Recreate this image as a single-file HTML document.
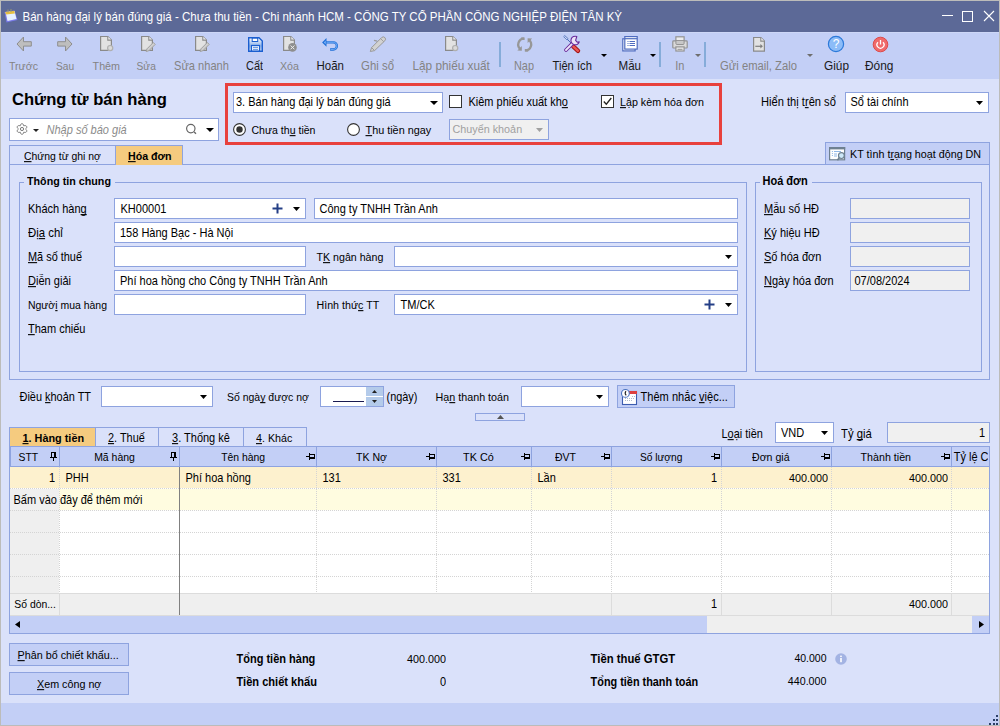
<!DOCTYPE html>
<html><head><meta charset="utf-8"><title>Chứng từ bán hàng</title>
<style>
html,body{margin:0;padding:0;width:1000px;height:726px;overflow:hidden;background:#dae1fa}
.a{position:absolute;margin:0;padding:0}
.t{white-space:nowrap;font-family:"Liberation Sans",sans-serif;line-height:normal}
u{text-decoration:underline;text-underline-offset:1px;text-decoration-skip-ink:none}
svg{overflow:visible}
</style></head><body>
<div class=a style='left:0;top:0;width:1000px;height:726px;background:#bcbcba'></div>
<div class=a style="left:1px;top:1px;width:998px;height:724px;background:#dae1fa;"></div>
<div class=a style="left:1px;top:1px;width:998px;height:31px;background:#5c6997;"></div>
<svg class=a style="left:3px;top:7px;" width=16 height=16 viewBox='0 0 16 16'><path d='M1.5 5 L11.5 3.5 L14.5 13 L3.5 15.5 Z' fill='#7a7ae8'/><path d='M2.5 5 L11.5 4 L13.5 12 L4.5 14 Z' fill='#e8f2ff'/><path d='M2.2 5 L11.3 3.8 L11.9 6.5 L3 7.6 Z' fill='#e8c040'/><path d='M5 2.5v3M8 2v3' stroke='#9a9a70' stroke-width='1'/></svg>
<div class='a t' style="left:22.5px;top:11px;font-size:11.52px;font-weight:normal;font-style:normal;color:#fff;transform:scaleY(1.09);transform-origin:0 10px;">Bán hàng đại lý bán đúng giá - Chưa thu tiền - Chi nhánh HCM - CÔNG TY CỔ PHẦN CÔNG NGHIỆP ĐIỆN TÂN KỲ</div>
<div class=a style="left:942px;top:15px;width:11px;height:1px;background:#fff;"></div>
<div class=a style="left:962px;top:11px;width:11px;height:11px;border:1px solid #fff;box-sizing:border-box;"></div>
<svg class=a style="left:983px;top:10px;" width=12 height=12 viewBox='0 0 12 12'><path d='M1 1L11 11M11 1L1 11' stroke='#fff' stroke-width='1.1'/></svg>
<div class=a style="left:1px;top:32px;width:998px;height:47px;background:#c3cff6;"></div>
<div class=a style="left:1px;top:32px;width:998px;height:1px;background:#cdd7f7;"></div>
<div class='a t' style="left:-176.5px;width:400px;text-align:center;top:60px;font-size:10.62px;font-weight:normal;font-style:normal;color:#838383;transform:scaleY(1.09);transform-origin:0 10px;">Trước</div>
<div class='a t' style="left:-135px;width:400px;text-align:center;top:61px;font-size:10.2px;font-weight:normal;font-style:normal;color:#838383;transform:scaleY(1.09);transform-origin:0 9px;">Sau</div>
<div class='a t' style="left:-93.7px;width:400px;text-align:center;top:60px;font-size:10.76px;font-weight:normal;font-style:normal;color:#838383;transform:scaleY(1.09);transform-origin:0 10px;">Thêm</div>
<div class='a t' style="left:-53.80000000000001px;width:400px;text-align:center;top:61px;font-size:10.2px;font-weight:normal;font-style:normal;color:#838383;transform:scaleY(1.09);transform-origin:0 9px;">Sửa</div>
<div class='a t' style="left:1.5px;width:400px;text-align:center;top:60px;font-size:11.1px;font-weight:normal;font-style:normal;color:#838383;transform:scaleY(1.09);transform-origin:0 10px;">Sửa nhanh</div>
<div class='a t' style="left:54.5px;width:400px;text-align:center;top:60px;font-size:10.92px;font-weight:normal;font-style:normal;color:#1a1a1a;transform:scaleY(1.09);transform-origin:0 10px;">Cất</div>
<div class='a t' style="left:89.5px;width:400px;text-align:center;top:60px;font-size:10.67px;font-weight:normal;font-style:normal;color:#838383;transform:scaleY(1.09);transform-origin:0 10px;">Xóa</div>
<div class='a t' style="left:130.2px;width:400px;text-align:center;top:60px;font-size:11.5px;font-weight:normal;font-style:normal;color:#1a1a1a;transform:scaleY(1.09);transform-origin:0 10px;">Hoãn</div>
<div class='a t' style="left:177.5px;width:400px;text-align:center;top:60px;font-size:11.41px;font-weight:normal;font-style:normal;color:#838383;transform:scaleY(1.09);transform-origin:0 10px;">Ghi sổ</div>
<div class='a t' style="left:251.2px;width:400px;text-align:center;top:59px;font-size:11.8px;font-weight:normal;font-style:normal;color:#838383;transform:scaleY(1.09);transform-origin:0 11px;">Lập phiếu xuất</div>
<div class='a t' style="left:324px;width:400px;text-align:center;top:60px;font-size:10.9px;font-weight:normal;font-style:normal;color:#838383;transform:scaleY(1.09);transform-origin:0 10px;">Nạp</div>
<div class='a t' style="left:372.20000000000005px;width:400px;text-align:center;top:60px;font-size:11.21px;font-weight:normal;font-style:normal;color:#1a1a1a;transform:scaleY(1.09);transform-origin:0 10px;">Tiện ích</div>
<div class='a t' style="left:429.79999999999995px;width:400px;text-align:center;top:60px;font-size:11.56px;font-weight:normal;font-style:normal;color:#1a1a1a;transform:scaleY(1.09);transform-origin:0 10px;">Mẫu</div>
<div class='a t' style="left:479.79999999999995px;width:400px;text-align:center;top:60px;font-size:11px;font-weight:normal;font-style:normal;color:#838383;transform:scaleY(1.09);transform-origin:0 10px;">In</div>
<div class='a t' style="left:558.5px;width:400px;text-align:center;top:60px;font-size:11.26px;font-weight:normal;font-style:normal;color:#838383;transform:scaleY(1.09);transform-origin:0 10px;">Gửi email, Zalo</div>
<div class='a t' style="left:636.5px;width:400px;text-align:center;top:59px;font-size:11.83px;font-weight:normal;font-style:normal;color:#1a1a1a;transform:scaleY(1.09);transform-origin:0 11px;">Giúp</div>
<div class='a t' style="left:679.2px;width:400px;text-align:center;top:59px;font-size:11.91px;font-weight:normal;font-style:normal;color:#1a1a1a;transform:scaleY(1.09);transform-origin:0 11px;">Đóng</div>
<div class=a style="left:499px;top:42px;width:2px;height:25px;background:#86acd9;"></div>
<div class=a style="left:659px;top:42px;width:2px;height:25px;background:#86acd9;"></div>
<div class=a style="left:704px;top:42px;width:2px;height:25px;background:#86acd9;"></div>
<svg class=a style="left:601px;top:54px;" width=6 height=3 viewBox='0 0 6 3'><path d='M0 0H6L3 3Z' fill='#000'/></svg>
<svg class=a style="left:650px;top:54px;" width=6 height=3 viewBox='0 0 6 3'><path d='M0 0H6L3 3Z' fill='#000'/></svg>
<svg class=a style="left:695px;top:54px;" width=6 height=3 viewBox='0 0 6 3'><path d='M0 0H6L3 3Z' fill='#6e6e6e'/></svg>
<svg class=a style="left:807px;top:54px;" width=6 height=3 viewBox='0 0 6 3'><path d='M0 0H6L3 3Z' fill='#6e6e6e'/></svg>
<svg class=a style="left:16px;top:36px;" width=17 height=17 viewBox='0 0 17 17'><path d='M7.5 1 L1 8 L7.5 15 V10.1 H15.3 V5.7 H7.5 Z' fill='#bebebe' stroke='#8e8e8e' stroke-width='1'/></svg>
<svg class=a style="left:57px;top:36px;" width=17 height=17 viewBox='0 0 17 17'><path d='M8.5 1 L15 8 L8.5 15 V10.1 H0.7 V5.7 H8.5 Z' fill='#bebebe' stroke='#8e8e8e' stroke-width='1'/></svg>
<svg class=a style="left:100px;top:35px;" width=16 height=18 viewBox='0 0 16 18'><path d='M0.6 1.5 H7.8 L11.4 5.1 V15.4 H0.6 Z' fill='#e2e2e2' stroke='#8a8a8a' stroke-width='1.2'/><path d='M7.8 1.5 V5.1 H11.4' fill='#f4f4f4' stroke='#8a8a8a' stroke-width='1.1'/><circle cx='10.2' cy='13.1' r='2.6' fill='#dadada' stroke='#b0b0b0' stroke-width='1.2'/></svg>
<svg class=a style="left:141px;top:35px;" width=16 height=18 viewBox='0 0 16 18'><path d='M0.6 1.5 H7.8 L11.4 5.1 V15.4 H0.6 Z' fill='#e2e2e2' stroke='#8a8a8a' stroke-width='1.2'/><path d='M7.8 1.5 V5.1 H11.4' fill='#f4f4f4' stroke='#8a8a8a' stroke-width='1.1'/><path d='M5.2 16.5 L6 13.8 L12.3 7.5 L14.2 9.4 L7.9 15.7 Z' fill='#cfcfcf' stroke='#a0a0a0' stroke-width='1'/></svg>
<svg class=a style="left:195px;top:35px;" width=16 height=18 viewBox='0 0 16 18'><path d='M0.6 1.5 H7.8 L11.4 5.1 V15.4 H0.6 Z' fill='#e2e2e2' stroke='#8a8a8a' stroke-width='1.2'/><path d='M7.8 1.5 V5.1 H11.4' fill='#f4f4f4' stroke='#8a8a8a' stroke-width='1.1'/><path d='M5.2 16.5 L6 13.8 L12.3 7.5 L14.2 9.4 L7.9 15.7 Z' fill='#cfcfcf' stroke='#a0a0a0' stroke-width='1'/></svg>
<svg class=a style="left:283px;top:35px;" width=16 height=18 viewBox='0 0 16 18'><path d='M0.6 1.5 H7.8 L11.4 5.1 V15.4 H0.6 Z' fill='#e2e2e2' stroke='#8a8a8a' stroke-width='1.2'/><path d='M7.8 1.5 V5.1 H11.4' fill='#f4f4f4' stroke='#8a8a8a' stroke-width='1.1'/><circle cx='9.5' cy='12.4' r='4.3' fill='#8e8e8e'/><path d='M7.6 10.5L11.4 14.3M11.4 10.5L7.6 14.3' stroke='#efefef' stroke-width='1'/></svg>
<svg class=a style="left:445px;top:35px;" width=16 height=18 viewBox='0 0 16 18'><path d='M0.6 1.5 H7.8 L11.4 5.1 V15.4 H0.6 Z' fill='#e2e2e2' stroke='#8a8a8a' stroke-width='1.2'/><path d='M7.8 1.5 V5.1 H11.4' fill='#f4f4f4' stroke='#8a8a8a' stroke-width='1.1'/><circle cx='10.2' cy='13.1' r='2.6' fill='#dadada' stroke='#b0b0b0' stroke-width='1.2'/></svg>
<svg class=a style="left:753px;top:36px;" width=16 height=18 viewBox='0 0 16 18'><path d='M0.6 1.5 H7.8 L11.4 5.1 V15.1 H0.6 Z' fill='#e2e2e2' stroke='#8a8a8a' stroke-width='1.2'/><path d='M7.8 1.5 V5.1 H11.4' fill='#f4f4f4' stroke='#8a8a8a' stroke-width='1.1'/><path d='M2.3 10.3 H8' stroke='#7e7e7e' stroke-width='1.2'/><path d='M7.4 8 L9.9 10.3 L7.4 12.6 Z' fill='#7e7e7e'/></svg>
<svg class=a style="left:248px;top:37px;" width=15 height=15 viewBox='0 0 15 15'><defs><linearGradient id='sg' x1='0' y1='0' x2='0' y2='1'><stop offset='0' stop-color='#ffffff'/><stop offset='0.6' stop-color='#8fb3e8'/><stop offset='1' stop-color='#c8daf5'/></linearGradient></defs><path d='M0.7 0.7 H11 L14.3 4 V14.3 H0.7 Z' fill='url(#sg)' stroke='#1b5fd0' stroke-width='1.4'/><rect x='4.2' y='1.2' width='5.5' height='3.3' fill='#fff' stroke='#1b5fd0' stroke-width='1'/><rect x='3.5' y='8.5' width='8' height='5.5' fill='#fff' stroke='#1b5fd0' stroke-width='1.2'/><path d='M5 10.3H10M5 12.3H10' stroke='#3a78d8' stroke-width='0.9'/></svg>
<svg class=a style="left:321px;top:37px;" width=18 height=16 viewBox='0 0 18 16'><path d='M5 5.3 H12.3 A3.6 3.6 0 0 1 12.3 12.5 H9.1' fill='none' stroke='#1f6fd8' stroke-width='2.3'/><path d='M5 5.3 H12.3 A3.6 3.6 0 0 1 12.3 12.5 H9.6' fill='none' stroke='#8cc0ff' stroke-width='0.7'/><path d='M1.1 5.4 L5.5 1 V9.8 Z' fill='#1f6fd8'/><path d='M3 5.4 L4.6 3.6 V7.2 Z' fill='#8cc0ff'/></svg>
<svg class=a style="left:369px;top:35px;" width=18 height=18 viewBox='0 0 18 18'><path d='M1.3 16.5 L2.6 12.6 L12.6 2.6 Q14.3 1 15.9 2.6 Q17.4 4.2 15.8 5.8 L5.6 15.6 Z' fill='#d2d2d2' stroke='#9a9a9a' stroke-width='1'/><path d='M2.6 12.6 L5.4 15.4' stroke='#9a9a9a' stroke-width='1'/><path d='M11.6 3.6 L14.8 6.8' stroke='#9a9a9a' stroke-width='0.9'/><path d='M5 5.3 L8.2 6.2' stroke='#9a9a9a' stroke-width='1.3'/></svg>
<svg class=a style="left:516px;top:36px;" width=17 height=17 viewBox='0 0 17 17'><g fill='none' stroke='#979797' stroke-width='2.3'><path d='M8 2.6 A5.9 5.9 0 0 0 4.6 13.2'/><path d='M9.4 14.4 A5.9 5.9 0 0 0 12.8 3.8'/></g><g fill='#979797'><path d='M5.2 1.4 H8.6 V4 H5.2 Z'/><path d='M1.3 14.6 L5.8 10 V14.8 Z'/><path d='M8.8 13 H12.2 V15.6 H8.8 Z'/><path d='M16.1 2.4 L11.6 7 V2.2 Z'/></g></svg>
<svg class=a style="left:563px;top:35px;" width=18 height=18 viewBox='0 0 18 18'><path d='M2.2 2.2 L8.5 8.5' stroke='#4a6ab8' stroke-width='1'/><path d='M0.7 1.6 L1.8 0.6 L5.2 3.8 L4.1 4.9 Z' fill='#e4ecff' stroke='#4a6ab8' stroke-width='0.9'/><path d='M10.2 11.4 L15 15.8' stroke='#a41414' stroke-width='4.4' stroke-linecap='round'/><path d='M10.2 11.4 L15 15.8' stroke='#ea5656' stroke-width='2.4' stroke-linecap='round'/><path d='M3 15 L9.6 8.4' stroke='#6a2a9a' stroke-width='3.8' stroke-linecap='round'/><path d='M3 15 L9.6 8.4' stroke='#ece4f8' stroke-width='1.9' stroke-linecap='round'/><path d='M13.8 1.5 A4.3 4.3 0 1 0 16.3 6.9 L14.2 7.2 L12.6 5.4 Z' fill='#ece4f8' stroke='#6a2a9a' stroke-width='1.1' stroke-linejoin='round'/></svg>
<svg class=a style="left:622px;top:35px;" width=17 height=18 viewBox='0 0 17 18'><rect x='0.8' y='3.8' width='12.3' height='12.1' fill='#fff' stroke='#4f6cbf' stroke-width='1.2'/><rect x='2.8' y='1.6' width='12.4' height='12.5' fill='#fff' stroke='#4f6cbf' stroke-width='1.2'/><path d='M2.8 3.7 H15.2' stroke='#4f6cbf' stroke-width='1.2'/><path d='M5.5 6.5H6.5M5.5 8.5H6.5M5.5 10.5H6.5M7.5 6.5H13M7.5 8.5H13M7.5 10.5H13' stroke='#4f6cbf' stroke-width='1'/></svg>
<svg class=a style="left:672px;top:35px;" width=17 height=18 viewBox='0 0 17 18'><rect x='3.9' y='1.8' width='8.2' height='4' fill='#ececec' stroke='#939393' stroke-width='1.2'/><rect x='0.8' y='5.9' width='14.4' height='7.1' rx='0.8' fill='#dadada' stroke='#939393' stroke-width='1.2'/><path d='M3.9 5.9 V8.5 Q3.9 9.5 5 9.5 H11 Q12.1 9.5 12.1 8.5 V5.9' fill='#c8c8c8' stroke='#939393' stroke-width='1'/><rect x='3.9' y='11.9' width='8.2' height='4.1' fill='#ececec' stroke='#939393' stroke-width='1.2'/><path d='M5.5 14.3H10.5' stroke='#939393' stroke-width='1'/></svg>
<svg class=a style="left:827px;top:35px;" width=18 height=18 viewBox='0 0 18 18'><circle cx='9' cy='9' r='7.6' fill='#8cbcf8' stroke='#2b79d9' stroke-width='1.2'/><text x='9' y='13.2' font-family='Liberation Sans' font-size='12' fill='#fff' text-anchor='middle'>?</text></svg>
<svg class=a style="left:872px;top:36px;" width=17 height=17 viewBox='0 0 17 17'><circle cx='8.5' cy='8.5' r='7.3' fill='#f06a6a' stroke='#dc4a4a' stroke-width='1'/><path d='M6 6.2 A3.5 3.5 0 1 0 11 6.2' fill='none' stroke='#fff' stroke-width='1.3'/><path d='M8.5 4V8.5' stroke='#fff' stroke-width='1.3'/></svg>
<div class='a t' style="left:12px;top:90px;font-size:16.6px;font-weight:bold;font-style:normal;color:#000;">Chứng từ bán hàng</div>
<div class=a style="left:9px;top:118px;width:210px;height:23px;background:#fff;border:1px solid #8ea3df;box-sizing:border-box;"></div>
<svg class=a style="left:16px;top:123px;" width=12 height=12 viewBox='0 0 12 12'><path d='M4.20 2.88 C4.50 -0.02 7.50 -0.02 7.80 2.88 C10.46 1.69 11.96 4.29 9.60 6.00 C11.96 7.71 10.46 10.31 7.80 9.12 C7.50 12.02 4.50 12.02 4.20 9.12 C1.54 10.31 0.04 7.71 2.40 6.00 C0.04 4.29 1.54 1.69 4.20 2.88 Z' fill='none' stroke='#7a7a7a' stroke-width='1'/><circle cx='6' cy='6' r='1.6' fill='none' stroke='#7a7a7a' stroke-width='1'/></svg>
<svg class=a style="left:33px;top:129px;" width=6 height=3 viewBox='0 0 6 3'><path d='M0 0H6L3 3Z' fill='#222'/></svg>
<div class='a t' style="left:46.5px;top:124px;font-size:11.03px;font-weight:normal;font-style:italic;color:#8c8c8c;transform:scaleY(1.09);transform-origin:0 10px;">Nhập số báo giá</div>
<svg class=a style="left:185px;top:123px;" width=13 height=13 viewBox='0 0 13 13'><circle cx='5.8' cy='5.6' r='4.2' fill='none' stroke='#666' stroke-width='1.2'/><path d='M9.2 9 L11 10.8' stroke='#666' stroke-width='1.3'/></svg>
<svg class=a style="left:206px;top:128px;" width=8 height=4 viewBox='0 0 8 4'><path d='M0 0H8L4 4Z' fill='#000'/></svg>
<div class=a style='left:225px;top:83px;width:497px;height:62px;border:3px solid #e8413d;box-sizing:border-box'></div>
<div class=a style="left:233px;top:92px;width:210px;height:21px;background:#fff;border:1px solid #8ea3df;box-sizing:border-box;"></div>
<div class='a t' style="left:236px;top:96px;font-size:11px;font-weight:normal;font-style:normal;color:#000;transform:scaleY(1.09);transform-origin:0 10px;">3. Bán hàng đại lý bán đúng giá</div>
<svg class=a style="left:430px;top:101px;" width=8 height=4 viewBox='0 0 8 4'><path d='M0 0H8L4 4Z' fill='#000'/></svg>
<div class=a style="left:449px;top:95px;width:13px;height:13px;background:#fff;border:1px solid #333;box-sizing:border-box;"></div>
<div class='a t' style="left:468.5px;top:96px;font-size:10.97px;font-weight:normal;font-style:normal;color:#000;transform:scaleY(1.09);transform-origin:0 10px;">Kiêm phiếu xuất kh<u>o</u></div>
<div class=a style="left:601px;top:95px;width:13px;height:13px;background:#fff;border:1px solid #333;box-sizing:border-box;"></div>
<svg class=a style="left:603px;top:97px;" width=9 height=9 viewBox='0 0 9 9'><path d='M0.8 4.5 L3.3 7.2 L8.3 1' fill='none' stroke='#222' stroke-width='1.3'/></svg>
<div class='a t' style="left:620px;top:96px;font-size:10.72px;font-weight:normal;font-style:normal;color:#000;transform:scaleY(1.09);transform-origin:0 10px;"><u>L</u>ập kèm hóa đơn</div>
<svg class=a style="left:233px;top:123px;" width=13 height=13 viewBox='0 0 13 13'><circle cx='6.5' cy='6.5' r='5.9' fill='#fff' stroke='#333' stroke-width='1.1'/><circle cx='6.5' cy='6.5' r='3.2' fill='#333'/></svg>
<div class='a t' style="left:251.5px;top:124px;font-size:10.55px;font-weight:normal;font-style:normal;color:#000;transform:scaleY(1.09);transform-origin:0 10px;">Chưa th<u>u</u> tiền</div>
<svg class=a style="left:347px;top:123px;" width=13 height=13 viewBox='0 0 13 13'><circle cx='6.5' cy='6.5' r='5.9' fill='#fff' stroke='#333' stroke-width='1.1'/></svg>
<div class='a t' style="left:365.5px;top:124px;font-size:10.85px;font-weight:normal;font-style:normal;color:#000;transform:scaleY(1.09);transform-origin:0 10px;"><u>T</u>hu tiền ngay</div>
<div class=a style="left:449px;top:119px;width:100px;height:21px;background:#f0f0f0;border:1px solid #8ea3df;box-sizing:border-box;"></div>
<div class='a t' style="left:452.5px;top:123px;font-size:10.81px;font-weight:normal;font-style:normal;color:#a0a0a0;transform:scaleY(1.09);transform-origin:0 10px;">Chuyển khoản</div>
<svg class=a style="left:536px;top:128px;" width=7 height=4 viewBox='0 0 7 4'><path d='M0 0H7L3.5 4Z' fill='#a0a0a0'/></svg>
<div class='a t' style="left:761px;top:96px;font-size:11.14px;font-weight:normal;font-style:normal;color:#000;transform:scaleY(1.09);transform-origin:0 10px;">Hiển thị t<u>r</u>ên sổ</div>
<div class=a style="left:845px;top:92px;width:144px;height:21px;background:#fff;border:1px solid #8ea3df;box-sizing:border-box;"></div>
<div class='a t' style="left:850.5px;top:96px;font-size:11px;font-weight:normal;font-style:normal;color:#000;transform:scaleY(1.09);transform-origin:0 10px;">Sổ tài chính</div>
<svg class=a style="left:976px;top:101px;" width=7 height=4 viewBox='0 0 7 4'><path d='M0 0H7L3.5 4Z' fill='#000'/></svg>
<div class=a style="left:9px;top:164px;width:981px;height:216px;border:1px solid #8ea3df;box-sizing:border-box;"></div>
<div class=a style="left:9px;top:145px;width:174px;height:20px;"></div>
<div class=a style='left:9px;top:145px;width:107px;height:20px;border:1px solid #8ea3df;box-sizing:border-box;background:#dae1fa'></div>
<div class=a style='left:115px;top:145px;width:68px;height:20px;border:1px solid #8ea3df;border-bottom:none;box-sizing:border-box;background:#f5cb7f'></div>
<div class='a t' style="left:24px;top:151px;font-size:10.42px;font-weight:normal;font-style:normal;color:#000;transform:scaleY(1.09);transform-origin:0 9px;"><u>C</u>hứng từ ghi nợ</div>
<div class='a t' style="left:128px;top:150px;font-size:10.63px;font-weight:bold;font-style:normal;color:#000;transform:scaleY(1.09);transform-origin:0 10px;"><u>H</u>óa đơn</div>
<div class=a style='left:825px;top:142px;width:165px;height:23px;border:1px solid #8ea3df;box-sizing:border-box;background:#c3cff6'></div>
<svg class=a style="left:829px;top:147px;" width=17 height=15 viewBox='0 0 17 15'><rect x='0.6' y='0.6' width='15' height='12.2' fill='#fff' stroke='#6e8090' stroke-width='1.2'/><rect x='0' y='0' width='16.2' height='2.4' fill='#6e8090'/><path d='M3.4 4V10' stroke='#90b8e8' stroke-width='1' stroke-dasharray='1 1'/><path d='M5 4.5H12M5 7H8M5 9H8' stroke='#90b8e8' stroke-width='1'/><path d='M10.4 10.6 L8.4 13.2' stroke='#6e8090' stroke-width='1.6'/><circle cx='12.4' cy='8.6' r='2.9' fill='#cde8f8' stroke='#6e8090' stroke-width='1.2'/></svg>
<div class='a t' style="left:850px;top:148px;font-size:10.74px;font-weight:normal;font-style:normal;color:#000;transform:scaleY(1.09);transform-origin:0 10px;">KT tình t<u>r</u>ạng hoạt động DN</div>
<div class=a style="left:19px;top:182px;width:728px;height:190px;border:1px solid #8ea3df;box-sizing:border-box;"></div>
<div class=a style="left:24px;top:178px;width:91px;height:9px;background:#dae1fa;"></div>
<div class='a t' style="left:27px;top:174.5px;font-size:10.72px;font-weight:bold;font-style:normal;color:#000;transform:scaleY(1.09);transform-origin:0 10px;">Thông tin chung</div>
<div class=a style="left:755px;top:182px;width:227px;height:190px;border:1px solid #8ea3df;box-sizing:border-box;"></div>
<div class=a style="left:759.5px;top:178px;width:52.0px;height:9px;background:#dae1fa;"></div>
<div class='a t' style="left:762.5px;top:174.5px;font-size:11.02px;font-weight:bold;font-style:normal;color:#000;transform:scaleY(1.09);transform-origin:0 10px;">Hoá đơn</div>
<div class='a t' style="left:28px;top:203px;font-size:11.0px;font-weight:normal;font-style:normal;color:#000;transform:scaleY(1.09);transform-origin:0 10px;">Khách hàn<u>g</u></div>
<div class='a t' style="left:28px;top:227px;font-size:11.38px;font-weight:normal;font-style:normal;color:#000;transform:scaleY(1.09);transform-origin:0 10px;">Đị<u>a</u> chỉ</div>
<div class='a t' style="left:28px;top:251px;font-size:10.91px;font-weight:normal;font-style:normal;color:#000;transform:scaleY(1.09);transform-origin:0 10px;"><u>M</u>ã số thuế</div>
<div class='a t' style="left:28px;top:275px;font-size:11.05px;font-weight:normal;font-style:normal;color:#000;transform:scaleY(1.09);transform-origin:0 10px;"><u>D</u>iễn giải</div>
<div class='a t' style="left:28px;top:300px;font-size:10.46px;font-weight:normal;font-style:normal;color:#000;transform:scaleY(1.09);transform-origin:0 9px;">Ngườ<u>i</u> mua hàng</div>
<div class='a t' style="left:28px;top:323px;font-size:11px;font-weight:normal;font-style:normal;color:#000;transform:scaleY(1.09);transform-origin:0 10px;"><u>T</u>ham chiếu</div>
<div class=a style="left:114px;top:198px;width:192px;height:21px;background:#fff;border:1px solid #8ea3df;box-sizing:border-box;"></div>
<div class='a t' style="left:120.5px;top:203px;font-size:11px;font-weight:normal;font-style:normal;color:#000;transform:scaleY(1.09);transform-origin:0 10px;">KH00001</div>
<svg class=a style="left:272px;top:203px;" width=11 height=11 viewBox='0 0 11 11'><path d='M5.5 0.5V10.5M0.5 5.5H10.5' stroke='#243f86' stroke-width='2'/></svg>
<svg class=a style="left:293px;top:207px;" width=7 height=4 viewBox='0 0 7 4'><path d='M0 0H7L3.5 4Z' fill='#000'/></svg>
<div class=a style="left:314px;top:198px;width:424px;height:21px;background:#fff;border:1px solid #8ea3df;box-sizing:border-box;"></div>
<div class='a t' style="left:319.5px;top:203px;font-size:11px;font-weight:normal;font-style:normal;color:#000;transform:scaleY(1.09);transform-origin:0 10px;">Công ty TNHH Trần Anh</div>
<div class=a style="left:114px;top:222px;width:624px;height:21px;background:#fff;border:1px solid #8ea3df;box-sizing:border-box;"></div>
<div class='a t' style="left:120px;top:227px;font-size:11px;font-weight:normal;font-style:normal;color:#000;transform:scaleY(1.09);transform-origin:0 10px;">158 Hàng Bạc - Hà Nội</div>
<div class=a style="left:114px;top:246px;width:192px;height:21px;background:#fff;border:1px solid #8ea3df;box-sizing:border-box;"></div>
<div class='a t' style="left:316.5px;top:251px;font-size:10.65px;font-weight:normal;font-style:normal;color:#000;transform:scaleY(1.09);transform-origin:0 10px;">T<u>K</u> ngân hàng</div>
<div class=a style="left:394px;top:246px;width:344px;height:21px;background:#fff;border:1px solid #8ea3df;box-sizing:border-box;"></div>
<svg class=a style="left:725px;top:255px;" width=7 height=4 viewBox='0 0 7 4'><path d='M0 0H7L3.5 4Z' fill='#000'/></svg>
<div class=a style="left:114px;top:270px;width:624px;height:21px;background:#fff;border:1px solid #8ea3df;box-sizing:border-box;"></div>
<div class='a t' style="left:120px;top:275px;font-size:11px;font-weight:normal;font-style:normal;color:#000;transform:scaleY(1.09);transform-origin:0 10px;">Phí hoa hồng cho Công ty TNHH Trần Anh</div>
<div class=a style="left:114px;top:294px;width:192px;height:21px;background:#fff;border:1px solid #8ea3df;box-sizing:border-box;"></div>
<div class='a t' style="left:316.5px;top:299px;font-size:10.68px;font-weight:normal;font-style:normal;color:#000;transform:scaleY(1.09);transform-origin:0 10px;">Hình thứ<u>c</u> TT</div>
<div class=a style="left:394px;top:294px;width:344px;height:21px;background:#fff;border:1px solid #8ea3df;box-sizing:border-box;"></div>
<div class='a t' style="left:400.5px;top:299px;font-size:11px;font-weight:normal;font-style:normal;color:#000;transform:scaleY(1.09);transform-origin:0 10px;">TM/CK</div>
<svg class=a style="left:704px;top:299px;" width=11 height=11 viewBox='0 0 11 11'><path d='M5.5 0.5V10.5M0.5 5.5H10.5' stroke='#243f86' stroke-width='2'/></svg>
<svg class=a style="left:725px;top:303px;" width=7 height=4 viewBox='0 0 7 4'><path d='M0 0H7L3.5 4Z' fill='#000'/></svg>
<div class='a t' style="left:764px;top:203px;font-size:11px;font-weight:normal;font-style:normal;color:#000;transform:scaleY(1.09);transform-origin:0 10px;"><u>M</u>ẫu số HĐ</div>
<div class=a style="left:850px;top:198px;width:120px;height:21px;background:#f0f0f0;border:1px solid #8ea3df;box-sizing:border-box;"></div>
<div class='a t' style="left:764px;top:227px;font-size:11px;font-weight:normal;font-style:normal;color:#000;transform:scaleY(1.09);transform-origin:0 10px;"><u>K</u>ý hiệu HĐ</div>
<div class=a style="left:850px;top:222px;width:120px;height:21px;background:#f0f0f0;border:1px solid #8ea3df;box-sizing:border-box;"></div>
<div class='a t' style="left:764px;top:251px;font-size:11px;font-weight:normal;font-style:normal;color:#000;transform:scaleY(1.09);transform-origin:0 10px;"><u>S</u>ố hóa đơn</div>
<div class=a style="left:850px;top:246px;width:120px;height:21px;background:#f0f0f0;border:1px solid #8ea3df;box-sizing:border-box;"></div>
<div class='a t' style="left:764px;top:275px;font-size:11px;font-weight:normal;font-style:normal;color:#000;transform:scaleY(1.09);transform-origin:0 10px;"><u>N</u>gày hóa đơn</div>
<div class=a style="left:850px;top:270px;width:120px;height:21px;background:#f0f0f0;border:1px solid #8ea3df;box-sizing:border-box;"></div>
<div class='a t' style="left:854.5px;top:275px;font-size:11px;font-weight:normal;font-style:normal;color:#000;transform:scaleY(1.09);transform-origin:0 10px;">07/08/2024</div>
<div class='a t' style="left:19.5px;top:391px;font-size:10.94px;font-weight:normal;font-style:normal;color:#000;transform:scaleY(1.09);transform-origin:0 10px;">Điều <u>k</u>hoản TT</div>
<div class=a style="left:101px;top:386px;width:112px;height:21px;background:#fff;border:1px solid #8ea3df;box-sizing:border-box;"></div>
<svg class=a style="left:200px;top:395px;" width=7 height=4 viewBox='0 0 7 4'><path d='M0 0H7L3.5 4Z' fill='#000'/></svg>
<div class='a t' style="left:227px;top:392px;font-size:10.48px;font-weight:normal;font-style:normal;color:#000;transform:scaleY(1.09);transform-origin:0 9px;">Số ngà<u>y</u> được nợ</div>
<div class=a style="left:320px;top:386px;width:64px;height:21px;background:#fff;border:1px solid #8ea3df;box-sizing:border-box;"></div>
<div class=a style="left:366px;top:387px;width:17px;height:9px;background:#b4cbea;"></div>
<div class=a style="left:366px;top:397px;width:17px;height:9px;background:#b4cbea;"></div>
<svg class=a style="left:372px;top:390px;" width=5 height=3 viewBox='0 0 5 3'><path d='M0 3H5L2.5 0Z' fill='#222'/></svg>
<svg class=a style="left:372px;top:400px;" width=5 height=3 viewBox='0 0 5 3'><path d='M0 0H5L2.5 3Z' fill='#222'/></svg>
<div class=a style="left:333px;top:401px;width:31px;height:1px;background:#1a1a50;"></div>
<div class='a t' style="left:386.5px;top:391px;font-size:10.93px;font-weight:normal;font-style:normal;color:#000;transform:scaleY(1.09);transform-origin:0 10px;">(ngày)</div>
<div class='a t' style="left:435.5px;top:391px;font-size:10.75px;font-weight:normal;font-style:normal;color:#000;transform:scaleY(1.09);transform-origin:0 10px;">Hạ<u>n</u> thanh toán</div>
<div class=a style="left:521px;top:386px;width:88px;height:21px;background:#fff;border:1px solid #8ea3df;box-sizing:border-box;"></div>
<svg class=a style="left:596px;top:395px;" width=7 height=4 viewBox='0 0 7 4'><path d='M0 0H7L3.5 4Z' fill='#000'/></svg>
<div class=a style='left:617px;top:385px;width:118px;height:23px;border:1px solid #8ea3df;box-sizing:border-box;background:#c3cff6'></div>
<svg class=a style="left:621px;top:388px;" width=17 height=17 viewBox='0 0 17 17'><rect x='1.5' y='3.5' width='14' height='13' fill='#fff' stroke='#3d5db0' stroke-width='1.1'/><rect x='8' y='3' width='8' height='3' fill='#dd4040'/><g fill='#b0bccc'><rect x='11' y='8' width='1' height='1'/><rect x='13' y='8' width='1' height='1'/><rect x='4' y='10' width='1' height='1'/><rect x='6' y='10' width='1' height='1'/><rect x='8' y='10' width='1' height='1'/><rect x='10' y='10' width='1' height='1'/><rect x='12' y='10' width='1' height='1'/><rect x='4' y='12' width='1' height='1'/><rect x='6' y='12' width='1' height='1'/><rect x='8' y='12' width='1' height='1'/><rect x='10' y='12' width='1' height='1'/></g><circle cx='4.4' cy='5.4' r='3.9' fill='#fff' stroke='#4a72c0' stroke-width='1.1'/><path d='M5 3.2 Q3.2 5.2 5.2 7.4' fill='none' stroke='#222' stroke-width='1.1'/></svg>
<div class='a t' style="left:640.5px;top:391px;font-size:11.08px;font-weight:normal;font-style:normal;color:#000;transform:scaleY(1.09);transform-origin:0 10px;">Thêm nhắc <u>v</u>iệc...</div>
<div class=a style="left:475px;top:413px;width:50px;height:8px;border:1px solid #8ea3df;box-sizing:border-box;"></div>
<svg class=a style="left:497px;top:415px;" width=7 height=4 viewBox='0 0 7 4'><path d='M0 4H7L3.5 0Z' fill='#555'/></svg>
<div class='a t' style="left:721.5px;top:428px;font-size:10.94px;font-weight:normal;font-style:normal;color:#000;transform:scaleY(1.09);transform-origin:0 10px;">L<u>o</u>ại tiền</div>
<div class=a style="left:775px;top:422px;width:59px;height:21px;background:#fff;border:1px solid #8ea3df;box-sizing:border-box;"></div>
<div class='a t' style="left:781px;top:427px;font-size:11px;font-weight:normal;font-style:normal;color:#000;transform:scaleY(1.09);transform-origin:0 10px;">VND</div>
<svg class=a style="left:821px;top:431px;" width=7 height=4 viewBox='0 0 7 4'><path d='M0 0H7L3.5 4Z' fill='#000'/></svg>
<div class='a t' style="left:841px;top:428px;font-size:11.31px;font-weight:normal;font-style:normal;color:#000;transform:scaleY(1.09);transform-origin:0 10px;">Tỷ <u>g</u>iá</div>
<div class=a style="left:887px;top:422px;width:103px;height:21px;background:#f0f0f0;border:1px solid #8ea3df;box-sizing:border-box;"></div>
<div class='a t' style="left:585px;width:400px;text-align:right;top:427px;font-size:11px;font-weight:normal;font-style:normal;color:#000;transform:scaleY(1.09);transform-origin:0 10px;">1</div>
<div class=a style='left:9px;top:427px;width:87px;height:20px;border:1px solid #8ea3df;border-bottom:none;box-sizing:border-box;background:#f5cb7f'></div>
<div class=a style='left:95px;top:427px;width:64px;height:20px;border:1px solid #8ea3df;border-bottom:none;box-sizing:border-box;background:#dae1fa'></div>
<div class=a style='left:158px;top:427px;width:86px;height:20px;border:1px solid #8ea3df;border-bottom:none;box-sizing:border-box;background:#dae1fa'></div>
<div class=a style='left:243px;top:427px;width:64px;height:20px;border:1px solid #8ea3df;border-bottom:none;box-sizing:border-box;background:#dae1fa'></div>
<div class='a t' style="left:22.5px;top:432px;font-size:10.86px;font-weight:bold;font-style:normal;color:#000;transform:scaleY(1.09);transform-origin:0 10px;"><u>1</u>. Hàng tiền</div>
<div class='a t' style="left:108px;top:432px;font-size:10.9px;font-weight:normal;font-style:normal;color:#000;transform:scaleY(1.09);transform-origin:0 10px;"><u>2</u>. Thuế</div>
<div class='a t' style="left:172px;top:432px;font-size:11.01px;font-weight:normal;font-style:normal;color:#000;transform:scaleY(1.09);transform-origin:0 10px;"><u>3</u>. Thống kê</div>
<div class='a t' style="left:256px;top:432px;font-size:10.72px;font-weight:normal;font-style:normal;color:#000;transform:scaleY(1.09);transform-origin:0 10px;"><u>4</u>. Khác</div>
<div class=a style="left:9px;top:446px;width:981px;height:188px;background:#fff;border:1px solid #8ea3df;box-sizing:border-box;"></div>
<div class=a style="left:10px;top:447px;width:979px;height:19px;background:#c3cff6;"></div>
<div class=a style="left:10px;top:466px;width:979px;height:1px;background:#8ea3df;"></div>
<div class=a style="left:10px;top:447px;width:1px;height:19px;background:#8ea3df;"></div>
<div class=a style="left:59px;top:447px;width:1px;height:20px;background:#8ea3df;"></div>
<div class=a style="left:179px;top:447px;width:1px;height:20px;background:#8ea3df;"></div>
<div class=a style="left:316px;top:447px;width:1px;height:20px;background:#8ea3df;"></div>
<div class=a style="left:436px;top:447px;width:1px;height:20px;background:#8ea3df;"></div>
<div class=a style="left:531px;top:447px;width:1px;height:20px;background:#8ea3df;"></div>
<div class=a style="left:611px;top:447px;width:1px;height:20px;background:#8ea3df;"></div>
<div class=a style="left:721px;top:447px;width:1px;height:20px;background:#8ea3df;"></div>
<div class=a style="left:831px;top:447px;width:1px;height:20px;background:#8ea3df;"></div>
<div class=a style="left:951px;top:447px;width:1px;height:20px;background:#8ea3df;"></div>
<div class='a t' style="left:18.5px;top:452px;font-size:10.37px;font-weight:normal;font-style:normal;color:#000;transform:scaleY(1.09);transform-origin:0 9px;">STT</div>
<div class='a t' style="left:-85.5px;width:400px;text-align:center;top:452px;font-size:10.48px;font-weight:normal;font-style:normal;color:#000;transform:scaleY(1.09);transform-origin:0 9px;">Mã hàng</div>
<div class='a t' style="left:43.19999999999999px;width:400px;text-align:center;top:452px;font-size:10.4px;font-weight:normal;font-style:normal;color:#000;transform:scaleY(1.09);transform-origin:0 9px;">Tên hàng</div>
<div class='a t' style="left:171.5px;width:400px;text-align:center;top:451px;font-size:10.56px;font-weight:normal;font-style:normal;color:#000;transform:scaleY(1.09);transform-origin:0 10px;">TK Nợ</div>
<div class='a t' style="left:278.4px;width:400px;text-align:center;top:451px;font-size:10.86px;font-weight:normal;font-style:normal;color:#000;transform:scaleY(1.09);transform-origin:0 10px;">TK Có</div>
<div class='a t' style="left:365.5px;width:400px;text-align:center;top:451px;font-size:10.5px;font-weight:normal;font-style:normal;color:#000;transform:scaleY(1.09);transform-origin:0 10px;">ĐVT</div>
<div class='a t' style="left:461.20000000000005px;width:400px;text-align:center;top:452px;font-size:10.21px;font-weight:normal;font-style:normal;color:#000;transform:scaleY(1.09);transform-origin:0 9px;">Số lượng</div>
<div class='a t' style="left:570.8px;width:400px;text-align:center;top:451px;font-size:10.57px;font-weight:normal;font-style:normal;color:#000;transform:scaleY(1.09);transform-origin:0 10px;">Đơn giá</div>
<div class='a t' style="left:685.8px;width:400px;text-align:center;top:451px;font-size:10.68px;font-weight:normal;font-style:normal;color:#000;transform:scaleY(1.09);transform-origin:0 10px;">Thành tiền</div>
<div class=a style='left:952px;top:447px;width:36px;height:19px;overflow:hidden'>
<div class='a t' style="left:1.7px;top:4px;font-size:11px;font-weight:normal;font-style:normal;color:#000;transform:scaleY(1.09);transform-origin:0 10px;">Tỷ lệ CK</div>
</div>
<svg class=a style="left:50px;top:452px;" width=7 height=9 viewBox='0 0 7 9'><g fill='#000' shape-rendering='crispEdges'><rect x='1' y='0' width='5' height='1'/><rect x='1' y='0' width='1' height='5'/><rect x='4' y='0' width='2' height='5'/><rect x='0' y='5' width='7' height='1'/><rect x='3' y='6' width='1' height='3'/></g></svg>
<svg class=a style="left:170px;top:452px;" width=7 height=9 viewBox='0 0 7 9'><g fill='#000' shape-rendering='crispEdges'><rect x='1' y='0' width='5' height='1'/><rect x='1' y='0' width='1' height='5'/><rect x='4' y='0' width='2' height='5'/><rect x='0' y='5' width='7' height='1'/><rect x='3' y='6' width='1' height='3'/></g></svg>
<svg class=a style="left:306px;top:453px;" width=9 height=7 viewBox='0 0 9 7'><g fill='#000' shape-rendering='crispEdges'><rect x='0' y='3' width='3' height='1'/><rect x='3' y='0' width='1' height='7'/><rect x='4' y='1' width='5' height='1'/><rect x='4' y='4' width='5' height='2'/><rect x='8' y='1' width='1' height='5'/></g></svg>
<svg class=a style="left:426px;top:453px;" width=9 height=7 viewBox='0 0 9 7'><g fill='#000' shape-rendering='crispEdges'><rect x='0' y='3' width='3' height='1'/><rect x='3' y='0' width='1' height='7'/><rect x='4' y='1' width='5' height='1'/><rect x='4' y='4' width='5' height='2'/><rect x='8' y='1' width='1' height='5'/></g></svg>
<svg class=a style="left:521px;top:453px;" width=9 height=7 viewBox='0 0 9 7'><g fill='#000' shape-rendering='crispEdges'><rect x='0' y='3' width='3' height='1'/><rect x='3' y='0' width='1' height='7'/><rect x='4' y='1' width='5' height='1'/><rect x='4' y='4' width='5' height='2'/><rect x='8' y='1' width='1' height='5'/></g></svg>
<svg class=a style="left:601px;top:453px;" width=9 height=7 viewBox='0 0 9 7'><g fill='#000' shape-rendering='crispEdges'><rect x='0' y='3' width='3' height='1'/><rect x='3' y='0' width='1' height='7'/><rect x='4' y='1' width='5' height='1'/><rect x='4' y='4' width='5' height='2'/><rect x='8' y='1' width='1' height='5'/></g></svg>
<svg class=a style="left:711px;top:453px;" width=9 height=7 viewBox='0 0 9 7'><g fill='#000' shape-rendering='crispEdges'><rect x='0' y='3' width='3' height='1'/><rect x='3' y='0' width='1' height='7'/><rect x='4' y='1' width='5' height='1'/><rect x='4' y='4' width='5' height='2'/><rect x='8' y='1' width='1' height='5'/></g></svg>
<svg class=a style="left:821px;top:453px;" width=9 height=7 viewBox='0 0 9 7'><g fill='#000' shape-rendering='crispEdges'><rect x='0' y='3' width='3' height='1'/><rect x='3' y='0' width='1' height='7'/><rect x='4' y='1' width='5' height='1'/><rect x='4' y='4' width='5' height='2'/><rect x='8' y='1' width='1' height='5'/></g></svg>
<svg class=a style="left:941px;top:453px;" width=9 height=7 viewBox='0 0 9 7'><g fill='#000' shape-rendering='crispEdges'><rect x='0' y='3' width='3' height='1'/><rect x='3' y='0' width='1' height='7'/><rect x='4' y='1' width='5' height='1'/><rect x='4' y='4' width='5' height='2'/><rect x='8' y='1' width='1' height='5'/></g></svg>
<div class=a style="left:10px;top:467px;width:979px;height:21px;background:#fdf1ce;"></div>
<div class=a style="left:10px;top:489px;width:979px;height:21px;background:#fffce0;"></div>
<div class=a style="left:10px;top:489px;width:49px;height:104px;background:#efefef;"></div>
<div class=a style='left:10px;top:488px;width:979px;height:1px;background:repeating-linear-gradient(90deg,#d4d4d4 0 1px,transparent 1px 2px)'></div>
<div class=a style='left:10px;top:510px;width:979px;height:1px;background:repeating-linear-gradient(90deg,#d4d4d4 0 1px,transparent 1px 2px)'></div>
<div class=a style='left:10px;top:532px;width:979px;height:1px;background:repeating-linear-gradient(90deg,#d4d4d4 0 1px,transparent 1px 2px)'></div>
<div class=a style='left:10px;top:554px;width:979px;height:1px;background:repeating-linear-gradient(90deg,#d4d4d4 0 1px,transparent 1px 2px)'></div>
<div class=a style='left:10px;top:576px;width:979px;height:1px;background:repeating-linear-gradient(90deg,#d4d4d4 0 1px,transparent 1px 2px)'></div>
<div class=a style='left:59px;top:467px;width:1px;height:126px;background:repeating-linear-gradient(180deg,#d4d4d4 0 1px,transparent 1px 2px)'></div>
<div class=a style="left:179px;top:467px;width:1px;height:126px;background:#808080;"></div>
<div class=a style='left:316px;top:467px;width:1px;height:126px;background:repeating-linear-gradient(180deg,#d4d4d4 0 1px,transparent 1px 2px)'></div>
<div class=a style='left:436px;top:467px;width:1px;height:126px;background:repeating-linear-gradient(180deg,#d4d4d4 0 1px,transparent 1px 2px)'></div>
<div class=a style='left:531px;top:467px;width:1px;height:126px;background:repeating-linear-gradient(180deg,#d4d4d4 0 1px,transparent 1px 2px)'></div>
<div class=a style='left:611px;top:467px;width:1px;height:126px;background:repeating-linear-gradient(180deg,#d4d4d4 0 1px,transparent 1px 2px)'></div>
<div class=a style='left:721px;top:467px;width:1px;height:126px;background:repeating-linear-gradient(180deg,#d4d4d4 0 1px,transparent 1px 2px)'></div>
<div class=a style='left:831px;top:467px;width:1px;height:126px;background:repeating-linear-gradient(180deg,#d4d4d4 0 1px,transparent 1px 2px)'></div>
<div class=a style='left:951px;top:467px;width:1px;height:126px;background:repeating-linear-gradient(180deg,#d4d4d4 0 1px,transparent 1px 2px)'></div>
<div class='a t' style="left:-345px;width:400px;text-align:right;top:472px;font-size:11px;font-weight:normal;font-style:normal;color:#000;transform:scaleY(1.09);transform-origin:0 10px;">1</div>
<div class='a t' style="left:65.5px;top:472px;font-size:11px;font-weight:normal;font-style:normal;color:#000;transform:scaleY(1.09);transform-origin:0 10px;">PHH</div>
<div class='a t' style="left:185.5px;top:472px;font-size:11px;font-weight:normal;font-style:normal;color:#000;transform:scaleY(1.09);transform-origin:0 10px;">Phí hoa hồng</div>
<div class='a t' style="left:322.5px;top:472px;font-size:11px;font-weight:normal;font-style:normal;color:#000;transform:scaleY(1.09);transform-origin:0 10px;">131</div>
<div class='a t' style="left:442.5px;top:472px;font-size:11px;font-weight:normal;font-style:normal;color:#000;transform:scaleY(1.09);transform-origin:0 10px;">331</div>
<div class='a t' style="left:537.5px;top:472px;font-size:11px;font-weight:normal;font-style:normal;color:#000;transform:scaleY(1.09);transform-origin:0 10px;">Lần</div>
<div class='a t' style="left:317px;width:400px;text-align:right;top:472px;font-size:11px;font-weight:normal;font-style:normal;color:#000;transform:scaleY(1.09);transform-origin:0 10px;">1</div>
<div class='a t' style="left:428px;width:400px;text-align:right;top:472px;font-size:10.8px;font-weight:normal;font-style:normal;color:#000;transform:scaleY(1.09);transform-origin:0 10px;">400.000</div>
<div class='a t' style="left:548px;width:400px;text-align:right;top:472px;font-size:10.8px;font-weight:normal;font-style:normal;color:#000;transform:scaleY(1.09);transform-origin:0 10px;">400.000</div>
<div class='a t' style="left:13.5px;top:494px;font-size:11px;font-weight:normal;font-style:normal;color:#000;transform:scaleY(1.09);transform-origin:0 10px;">Bấm vào đây để thêm mới</div>
<div class=a style="left:10px;top:593px;width:979px;height:23px;background:#efefef;"></div>
<div class=a style="left:10px;top:593px;width:979px;height:1px;background:#dcdcdc;"></div>
<div class=a style="left:10px;top:615px;width:979px;height:1px;background:#dcdcdc;"></div>
<div class=a style="left:59px;top:594px;width:1px;height:21px;background:#dcdcdc;"></div>
<div class=a style="left:611px;top:594px;width:1px;height:21px;background:#dcdcdc;"></div>
<div class=a style="left:721px;top:594px;width:1px;height:21px;background:#dcdcdc;"></div>
<div class=a style="left:831px;top:594px;width:1px;height:21px;background:#dcdcdc;"></div>
<div class=a style="left:951px;top:594px;width:1px;height:21px;background:#dcdcdc;"></div>
<div class=a style="left:179px;top:593px;width:1px;height:22px;background:#808080;"></div>
<div class='a t' style="left:14.3px;top:599px;font-size:10.4px;font-weight:normal;font-style:normal;color:#000;transform:scaleY(1.09);transform-origin:0 9px;">Số dòn...</div>
<div class='a t' style="left:317px;width:400px;text-align:right;top:598px;font-size:11px;font-weight:normal;font-style:normal;color:#000;transform:scaleY(1.09);transform-origin:0 10px;">1</div>
<div class='a t' style="left:548px;width:400px;text-align:right;top:598px;font-size:10.8px;font-weight:normal;font-style:normal;color:#000;transform:scaleY(1.09);transform-origin:0 10px;">400.000</div>
<div class=a style="left:10px;top:616px;width:979px;height:17px;background:#efefef;"></div>
<div class=a style="left:10px;top:616px;width:697px;height:17px;background:#c3cff6;"></div>
<div class=a style="left:972px;top:616px;width:17px;height:17px;background:#c3cff6;"></div>
<svg class=a style="left:15px;top:621px;" width=5 height=7 viewBox='0 0 5 7'><path d='M5 0V7L0 3.5Z' fill='#000'/></svg>
<svg class=a style="left:979px;top:621px;" width=5 height=7 viewBox='0 0 5 7'><path d='M0 0V7L5 3.5Z' fill='#000'/></svg>
<div class=a style='left:9px;top:643px;width:120px;height:23px;border:1px solid #8ea3df;box-sizing:border-box;background:#c3cff6'></div>
<div class=a style='left:9px;top:672px;width:120px;height:23px;border:1px solid #8ea3df;box-sizing:border-box;background:#c3cff6'></div>
<div class='a t' style="left:17.5px;top:649px;font-size:10.79px;font-weight:normal;font-style:normal;color:#000;transform:scaleY(1.09);transform-origin:0 10px;"><u>P</u>hân bổ chiết khấu...</div>
<div class='a t' style="left:37px;top:678px;font-size:10.76px;font-weight:normal;font-style:normal;color:#000;transform:scaleY(1.09);transform-origin:0 10px;"><u>X</u>em công nợ</div>
<div class='a t' style="left:236.5px;top:653px;font-size:11.01px;font-weight:bold;font-style:normal;color:#000;transform:scaleY(1.09);transform-origin:0 10px;">Tổng tiền hàng</div>
<div class='a t' style="left:236.5px;top:675.5px;font-size:11.08px;font-weight:bold;font-style:normal;color:#000;transform:scaleY(1.09);transform-origin:0 10px;">Tiền chiết khấu</div>
<div class='a t' style="left:46px;width:400px;text-align:right;top:653px;font-size:10.8px;font-weight:normal;font-style:normal;color:#000;transform:scaleY(1.09);transform-origin:0 10px;">400.000</div>
<div class='a t' style="left:46px;width:400px;text-align:right;top:675.5px;font-size:11px;font-weight:normal;font-style:normal;color:#000;transform:scaleY(1.09);transform-origin:0 10px;">0</div>
<div class='a t' style="left:590.6px;top:652.5px;font-size:11.3px;font-weight:bold;font-style:normal;color:#000;transform:scaleY(1.09);transform-origin:0 10px;">Tiền thuế GTGT</div>
<div class='a t' style="left:590.6px;top:675.5px;font-size:10.88px;font-weight:bold;font-style:normal;color:#000;transform:scaleY(1.09);transform-origin:0 10px;">Tổng tiền thanh toán</div>
<div class='a t' style="left:426.5px;width:400px;text-align:right;top:651.5px;font-size:10.51px;font-weight:normal;font-style:normal;color:#000;transform:scaleY(1.09);transform-origin:0 10px;">40.000</div>
<div class='a t' style="left:426.5px;width:400px;text-align:right;top:674.5px;font-size:10.72px;font-weight:normal;font-style:normal;color:#000;transform:scaleY(1.09);transform-origin:0 10px;">440.000</div>
<svg class=a style="left:835px;top:653px;" width=12 height=12 viewBox='0 0 12 12'><circle cx='6' cy='6' r='5.8' fill='#a3b3e3'/><rect x='5.2' y='5' width='1.6' height='4.2' fill='#fff'/><rect x='5.2' y='2.6' width='1.6' height='1.5' fill='#fff'/></svg>
<div class=a style="left:1px;top:703px;width:998px;height:22px;background:#c3cff6;"></div>
<div class=a style="left:996px;top:715px;width:2px;height:2px;background:#2b3f66;"></div>
<div class=a style="left:993px;top:719px;width:2px;height:2px;background:#2b3f66;"></div>
<div class=a style="left:996px;top:719px;width:2px;height:2px;background:#2b3f66;"></div>
<div class=a style="left:989px;top:723px;width:2px;height:2px;background:#2b3f66;"></div>
<div class=a style="left:993px;top:723px;width:2px;height:2px;background:#2b3f66;"></div>
<div class=a style="left:996px;top:723px;width:2px;height:2px;background:#2b3f66;"></div>
</body></html>
